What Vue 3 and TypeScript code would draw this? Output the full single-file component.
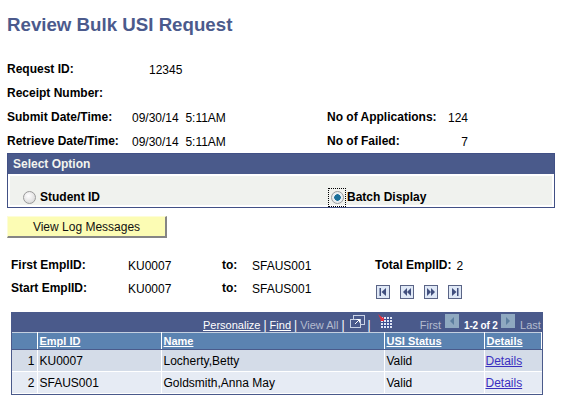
<script setup lang="ts">
interface Row { n: number; id: string; name: string; status: string }
const rows: Row[] = [
  { n: 1, id: 'KU0007', name: 'Locherty,Betty', status: 'Valid' },
  { n: 2, id: 'SFAUS001', name: 'Goldsmith,Anna May', status: 'Valid' },
]
</script>

<template>
  <div class="page">
    <h1 class="title">Review Bulk USI Request</h1>

    <section class="fields">
      <div class="field-row"><b class="lab">Request ID:</b><span class="req">12345</span></div>
      <div class="field-row"><b class="lab">Receipt Number:</b></div>
      <div class="field-row">
        <b class="lab">Submit Date/Time:</b><span class="dt">09/30/14&nbsp; 5:11AM</span>
        <b class="rlab">No of Applications:</b><span class="rval">124</span>
      </div>
      <div class="field-row">
        <b class="lab">Retrieve Date/Time:</b><span class="dt">09/30/14&nbsp; 5:11AM</span>
        <b class="rlab">No of Failed:</b><span class="rval">7</span>
      </div>
    </section>

    <section class="panel">
      <div class="panel-head">Select Option</div>
      <div class="panel-body">
        <label class="opt first">
          <span class="radio"></span><b>Student ID</b>
        </label>
        <label class="opt second">
          <span class="focus"><span class="radio on"></span></span><b>Batch Display</b>
        </label>
      </div>
    </section>

    <button class="btn" type="button">View Log Messages</button>

    <section class="range">
      <div class="range-row">
        <b class="r1">First EmplID:</b><span class="r2">KU0007</span><b class="r3">to:</b><span class="r4">SFAUS001</span>
        <b class="r5">Total EmplID:</b><span class="r6">2</span>
      </div>
      <div class="range-row">
        <b class="r1">Start EmplID:</b><span class="r2">KU0007</span><b class="r3">to:</b><span class="r4">SFAUS001</span>
        <span class="nav">
          <svg width="14" height="14" viewBox="0 0 14 14"><rect x=".5" y=".5" width="13" height="13" fill="#dfe8f6" stroke="#5a6486"/><path d="M3.500 3h1.500v8H3.500zM10 3v8L5.500 7z" fill="#414f7e"/></svg>
          <svg width="14" height="14" viewBox="0 0 14 14"><rect x=".5" y=".5" width="13" height="13" fill="#dfe8f6" stroke="#5a6486"/><path d="M7 3v8L3 7zM11 3v8L7 7z" fill="#414f7e"/></svg>
          <svg width="14" height="14" viewBox="0 0 14 14"><rect x=".5" y=".5" width="13" height="13" fill="#dfe8f6" stroke="#5a6486"/><path d="M3 3v8l4-4zM7 3v8l4-4z" fill="#414f7e"/></svg>
          <svg width="14" height="14" viewBox="0 0 14 14"><rect x=".5" y=".5" width="13" height="13" fill="#dfe8f6" stroke="#5a6486"/><path d="M4 3v8l4.500-4zM9 3h1.500v8H9z" fill="#414f7e"/></svg>
        </span>
      </div>
    </section>

    <section class="grid">
      <div class="bar">
        <a class="link">Personalize</a><i class="sep">|</i><a class="link">Find</a><i class="sep">|</i><span class="dim">View All</span><i class="sep">|</i>
        <svg class="ico-zoom" width="15" height="14" viewBox="0 0 15 14" fill="none" stroke="#c9d3e6">
          <rect x="3.500" y=".5" width="11" height="9" fill="#4a5a8c"/>
          <rect x=".5" y="4.500" width="10" height="8" fill="#4a5a8c"/>
          <path d="M5 9l4-4M6.500 4.500H9.500V7.500" stroke="#fff"/>
        </svg>
        <i class="sep s2">|</i>
        <svg class="ico-grid" width="14" height="14" viewBox="0 0 14 14">
          <rect x="3" y="3" width="11" height="11" fill="#dfe6f5"/>
          <path d="M3 5.500h11M3 8.500h11M3 11.500h11M5.500 3v11M8.500 3v11M11.500 3v11" stroke="#3d4f8f"/>
          <path d="M0 0l5 4 1-1v4H2l1-1z" fill="#e03040"/>
        </svg>
        <span class="dim first-lab">First</span>
        <span class="pg"><svg width="14" height="14" viewBox="0 0 14 14"><rect width="14" height="14" fill="#8fa9c0"/><path d="M9 3v8L5 7z" fill="#5d7f9f"/></svg></span>
        <b class="count">1-2 of 2</b>
        <span class="pg"><svg width="14" height="14" viewBox="0 0 14 14"><rect width="14" height="14" fill="#8fa9c0"/><path d="M5 3v8l4-4z" fill="#5d7f9f"/></svg></span>
        <span class="dim last-lab">Last</span>
      </div>
      <table class="tbl">
        <colgroup>
          <col class="c0" /><col class="c1" /><col class="c2" /><col class="c3" /><col class="c4" />
        </colgroup>
        <thead>
          <tr>
            <th></th><th><a>Empl ID</a></th><th><a>Name</a></th><th><a>USI Status</a></th><th><a>Details</a></th>
          </tr>
        </thead>
        <tbody>
          <tr v-for="r in rows" :key="r.n" :class="r.n % 2 ? 'odd' : 'even'">
            <td class="num">{{ r.n }}</td>
            <td>{{ r.id }}</td>
            <td>{{ r.name }}</td>
            <td>{{ r.status }}</td>
            <td><a class="det">Details</a></td>
          </tr>
        </tbody>
      </table>
    </section>
  </div>
</template>

<style scoped>
.page {
  width: 564px;
  height: 405px;
  overflow: hidden;
  background: #fff;
  font-family: "Liberation Sans", Arial, sans-serif;
  font-size: 12px;
  color: #000;
  padding-top: 14px;
  box-sizing: border-box;
}
.title {
  margin: 0 0 0 7px;
  font-size: 18.7px;
  line-height: 21px;
  font-weight: bold;
  color: #4b5a8c;
}
.fields { margin: 27px 0 0 7px; }
.field-row {
  display: flex;
  height: 24px;
  line-height: 14px;
}
.field-row:last-child { height: 19px; }
.lab { width: 125px; flex: none; }
.req { margin-left: 17px; position: relative; top: 1px; }
.dt { width: 195px; flex: none; position: relative; top: 1px; }
.rlab { width: 120px; flex: none; }
.rval { width: 21px; text-align: right; flex: none; position: relative; top: 1px; }
.panel {
  margin: 0 9px 0 7px;
  border: 1px solid #415085;
  background: #fff;
  height: 53px;
}
.panel-head {
  background: #4a5a8b;
  color: #f3f4ef;
  font-weight: bold;
  height: 20px;
  line-height: 21px;
  padding-left: 5px;
}
.panel-body {
  display: flex;
  background: #f0f2ee;
  margin: 2px 2px 0;
  height: 29px;
  padding-top: 12px;
  box-sizing: border-box;
}
.opt { display: flex; align-items: center; height: 18px; }
.opt.first { margin-left: 13px; width: 305px; }
.radio {
  width: 11px;
  height: 11px;
  flex: none;
  border-radius: 50%;
  border: 1px solid #9a9a9a;
  background: radial-gradient(circle at 40% 35%, #fff, #d0d0d0);
  margin-right: 4px;
}
.radio.on {
  margin: 0;
  background: radial-gradient(circle, #1a6f9a 0 3px, #e8eef2 3.500px);
}
.focus {
  width: 18px;
  height: 19px;
  flex: none;
  display: flex;
  align-items: center;
  justify-content: center;
  outline: 1px dotted #000;
  outline-offset: -1px;
  margin-right: 1px;
}
.btn {
  display: block;
  margin: 8px 0 0 7px;
  width: 160px;
  height: 22px;
  padding: 0;
  font: 12px "Liberation Sans", Arial, sans-serif;
  color: #111;
  background: #fcfcb4;
  border-style: solid;
  border-width: 1px 2px 2px 1px;
  border-color: #fdfdd8 #858585 #858585 #fdfdd8;
}
.range { margin: 20px 0 0 11px; }
.range-row { display: flex; height: 23px; line-height: 14px; }
.r1 { width: 117px; flex: none; }
.r2 { width: 94px; flex: none; position: relative; top: 1px; }
.r3 { width: 30px; flex: none; }
.r4 { width: 123px; flex: none; position: relative; top: 1px; }
.r6 { margin-left: 5px; position: relative; top: 1px; }
.nav { display: flex; gap: 10px; margin-top: 4px; margin-left: 1px; height: 14px; }
.nav svg { display: block; }
.grid {
  margin: 8px 21px 0 11px;
  background: #4a5a8b;
  border: 1px solid #4a5a8b;
  border-top: 0;
}
.bar {
  height: 20px;
  display: flex;
  align-items: flex-end;
  color: #fff;
  font-size: 11px;
  line-height: 13px;
  white-space: nowrap;
  padding-left: 191px;
  padding-bottom: 0;
  box-sizing: border-box;
}
.bar > * { flex: none; }
.link { color: #fff; text-decoration: underline; }
.sep { font-style: normal; margin: 0 3px; font-size: 12px; }
.dim { color: #b4bccf; }
.ico-zoom { margin: 0 0 3px 2px; }
.s2 { margin: 0 7px 0 3px; }
.ico-grid { margin-bottom: 4px; }
.first-lab { margin-left: 28px; }
.pg { margin: 0 4px; height: 18px; }
.pg svg { display: block; }
.count { color: #fff; font-size: 10px; width: 33px; margin-left: 1px; letter-spacing: -0.2px; }
.last-lab { margin-left: 1px; }
.tbl {
  width: 100%;
  table-layout: fixed;
  border-collapse: collapse;
  color: #000;
}
.c0 { width: 25px; }
.c1 { width: 124px; }
.c2 { width: 223px; }
.c3 { width: 100px; }
.tbl th {
  background: #5b83b1;
  height: 16px;
  padding: 0 0 0 2px;
  text-align: left;
  border: 1px solid #fff;
  border-width: 1px 1px 1px 0;
  border-color: #c3cfe0 #fff #4a5a8b #c3cfe0;
  font-size: 11px;
  line-height: 14px;
}
.tbl th a { color: #fff; text-decoration: underline; font-weight: bold; }
.tbl td {
  height: 21px;
  padding: 0 0 0 2px;
  border-right: 1px solid #fff;
  border-bottom: 1px solid #fff;
  line-height: 14px;
}
.tbl td:last-child { border-right: 0; padding-left: 1px; }
.odd td { background: #d4dce8; }
.even td { background: #e6ebf4; }
.tbl td.num { text-align: right; padding: 0 2px 0 0; }
.det { color: #3a2fc0; text-decoration: underline; }
</style>

<style>
html, body { margin: 0; background: #fff; }
</style>
